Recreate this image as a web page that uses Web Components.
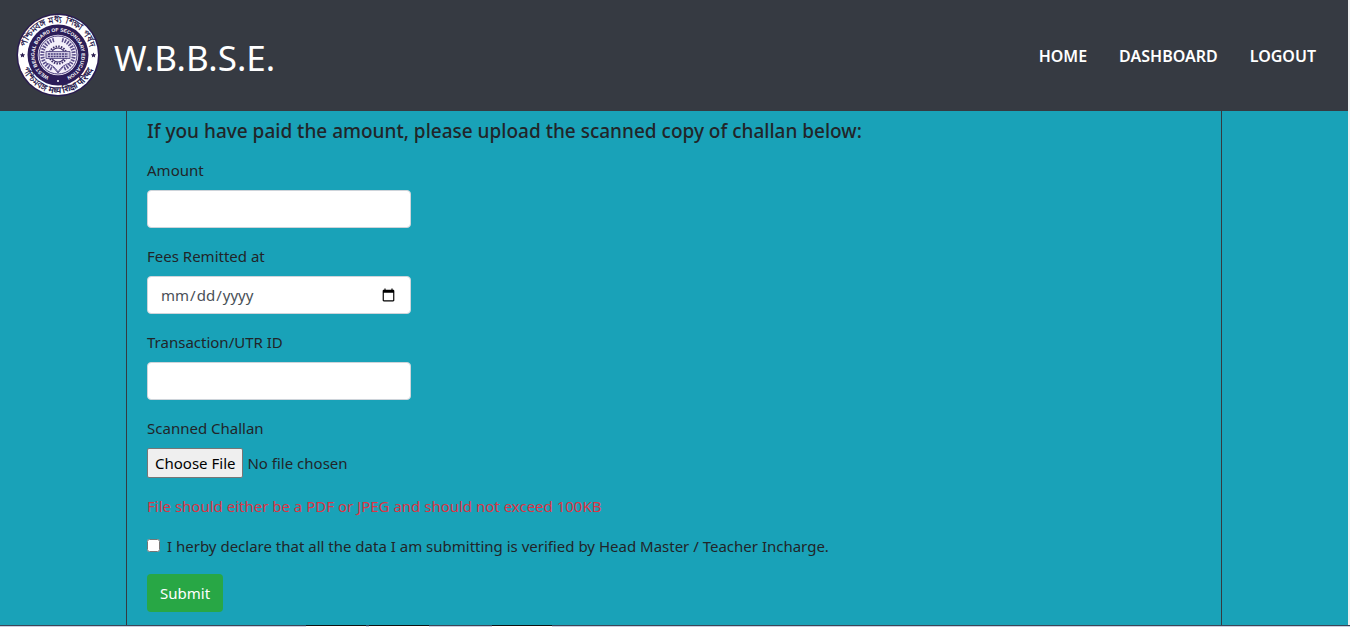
<!DOCTYPE html>
<html lang="en">
<head>
<meta charset="utf-8">
<meta name="viewport" content="width=device-width, initial-scale=1">
<title>W.B.B.S.E. | Upload challan</title>
<style>
body{margin:0;background:#f0f0f0;color:#212529;font:15px/24px "Noto Sans","Open Sans",sans-serif}
</style>
</head>
<body>
<board-page>
  <site-header slot="header">
    <board-seal slot="logo"></board-seal>
    <span slot="brand">W.B.B.S.E.</span>
    <nav-link to="#home">HOME</nav-link>
    <nav-link to="#dashboard">DASHBOARD</nav-link>
    <nav-link to="#logout">LOGOUT</nav-link>
  </site-header>
  <challan-form>
    <span slot="title">If you have paid the amount, please upload the scanned copy of challan below:</span>
    <form-field label="Amount" type="text"></form-field>
    <form-field label="Fees Remitted at" type="date"></form-field>
    <form-field label="Transaction/UTR ID" type="text"></form-field>
    <form-field label="Scanned Challan" type="file"></form-field>
  </challan-form>
  <task-strip slot="footer"></task-strip>
</board-page>
<script>
class Base extends HTMLElement {
  constructor() {
    super();
    this.attachShadow({ mode: "open" });
  }
  connectedCallback() {
    this.shadowRoot.innerHTML = this.render();
  }
}

customElements.define("board-page", class extends Base {
  render() {
    return `<style>
      :host{display:flex;flex-direction:column;min-height:100vh}
      .view{flex:1;display:flex;flex-direction:column;margin-right:2px;background:#19a2b8}
      main{flex:1;display:flex;justify-content:center}
    </style>
    <div class="view"><slot name="header"></slot><main><slot></slot></main></div>
    <slot name="footer"></slot>`;
  }
});

customElements.define("site-header", class extends Base {
  render() {
    return `<style>
      :host{display:block;background:#363a42;color:#fff}
      header{display:flex;align-items:center;justify-content:space-between;padding:12px 16px 13px}
      a{display:flex;align-items:center;gap:14px;color:inherit;text-decoration:none}
      .brand{font-size:35px;line-height:54px;padding-top:6px}
      nav{display:flex;padding-top:2px}
    </style>
    <header>
      <a href="#home"><slot name="logo"></slot><div class="brand"><slot name="brand"></slot></div></a>
      <nav aria-label="Main"><slot></slot></nav>
    </header>`;
  }
});

customElements.define("nav-link", class extends Base {
  render() {
    return `<style>
      :host{display:block}
      a{display:block;padding:8px 16px;color:#fff;text-decoration:none;font-size:16px;font-weight:600}
    </style>
    <a href="${this.getAttribute("to")}"><slot></slot></a>`;
  }
});

customElements.define("board-seal", class extends Base {
  render() {
    return `<style>
      :host{display:block;width:84px;height:86px}
      svg{display:block;width:100%;height:100%}
      text{font-family:"Liberation Sans",sans-serif;font-weight:700}
    </style>
    <svg viewBox="-42 -43 84 86" role="img" aria-label="West Bengal Board of Secondary Education">
      <defs>
        <path id="outerTop" d="M-32.5 0A32.5 32.5 0 0 1 32.5 0"/>
        <path id="outerLow" d="M-38 0A38 38 0 0 0 38 0"/>
        <path id="ring" d="M0 23.5A23.5 23.5 0 1 1 .1 23.5"/>
      </defs>
      <circle r="41.5" fill="#2b1d50"/>
      <circle r="40" fill="#fff"/>
      <circle r="30.5" fill="#2b1d58"/>
      <circle r="20.3" fill="#f3effa"/>
      <circle r="19" fill="none" stroke="#4a3d7c"/>
      <g fill="#2b1d50" font-size="9">
        <text text-anchor="middle"><textPath href="#outerTop" startOffset="50%">পশ্চিমবঙ্গ মধ্য শিক্ষা পর্ষদ</textPath></text>
        <text text-anchor="middle"><textPath href="#outerLow" startOffset="50%">পশ্চিমবঙ্গ मध्य शिक्षा परिषद</textPath></text>
      </g>
      <text fill="#fff" font-size="5" text-anchor="middle"><textPath href="#ring" startOffset="50%">WEST BENGAL BOARD OF SECONDARY EDUCATION</textPath></text>
      <circle r="1" cy="26" fill="#fff"/>
      <path fill="#2b1d50" d="M-35.5-2.5l.8 1.7 1.9.2-1.4 1.3.4 1.8-1.7-.9-1.7.9.4-1.8-1.4-1.3 1.9-.2zM35.5-2.5l.8 1.7 1.9.2-1.4 1.3.4 1.8-1.7-.9-1.7.9.4-1.8-1.4-1.3 1.9-.2z"/>
      <g fill="none" stroke="#5a4e8a">
        <path stroke-width="4" stroke-dasharray="1.6 1.2" d="M-4-15A15 15 0 0 0-5 14M4-15A15 15 0 0 1 5 14"/>
        <path d="M-12 8q8 2 12 9q4-7 12-9M-5 12l5 6 5-6"/>
        <circle r="8.6" fill="#f3effa" stroke="#3a2d68" stroke-width="2" stroke-dasharray="1.5 1.2"/>
        <circle r="7" stroke="#3a2d68" stroke-width="1.2"/>
      </g>
      <path d="M-12-3.5h24v7h-24z" fill="#cfc8e2" stroke="#4a3d7c" stroke-width=".8"/>
      <path d="M-10-1h20M-10 1.5h20" stroke="#4a3d7c" stroke-width="1.6" stroke-dasharray="2 .8"/>
    </svg>`;
  }
});

customElements.define("challan-form", class extends Base {
  render() {
    return `<style>
      :host{display:block;box-sizing:border-box;width:81.3%;padding:8px 20px 13px;border:solid #343a40;border-width:0 1px}
      h5{margin:0 0 15px;font-size:19px;line-height:24px;font-weight:500}
      p{margin:0 0 16px;color:#dc3545}
      .check{display:flex;align-items:center;gap:7px;margin-bottom:16px}
      .check input{margin:0 0 2px;width:13px;height:13px}
      button{display:block;height:38px;padding:0 13px;border:0;border-radius:4px;background:#28a745;color:#fff;font:inherit}
    </style>
    <form onsubmit="return false">
      <h5><slot name="title"></slot></h5>
      <slot></slot>
      <p>File should either be a PDF or JPEG and should not exceed 100KB</p>
      <div class="check"><input type="checkbox" id="declare"><label for="declare">I herby declare that all the data I am submitting is verified by Head Master / Teacher Incharge.</label></div>
      <button type="submit">Submit</button>
    </form>`;
  }
});

customElements.define("form-field", class extends Base {
  render() {
    return `<style>
      :host{display:block;margin-bottom:16px}
      label{display:block;margin-bottom:8px}
      input{display:block;box-sizing:border-box;font:inherit;margin:0}
      input:not([type=file]){width:25%;height:38px;padding:6px 12px;border:1px solid #ced4da;border-radius:4px;background:#fff;color:#495057}
      [type=file]{width:100%;height:30px;line-height:30px;color:inherit}
      ::file-selector-button{box-sizing:border-box;height:30px;margin:0 4px 0 0;padding:0 7px;border:1px solid #767676;border-radius:2px;background:#efefef;color:#000;font:inherit;line-height:28px}
    </style>
    <label for="control">${this.getAttribute("label")}</label>
    <input id="control" type="${this.getAttribute("type")}">`;
  }
});

customElements.define("task-strip", class extends Base {
  render() {
    return `<style>
      :host{display:flex;height:1px;padding-left:306px;border-top:1px solid #3b4657;background:#c9cfe0}
      i{width:60px;margin-right:3px;background:#fff;border-top:1px solid #111;margin-top:-1px}
      i:last-child{margin-left:60px}
    </style><i></i><i></i><i></i>`;
  }
});
</script>
</body>
</html>
